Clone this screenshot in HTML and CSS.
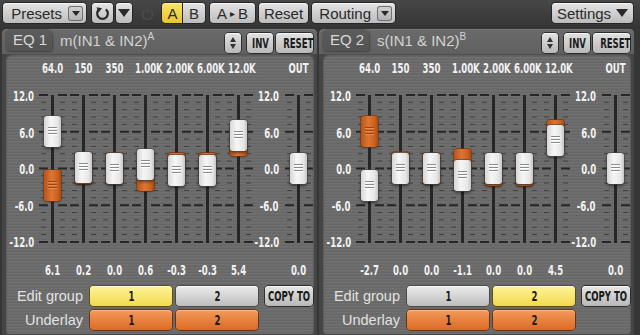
FILE: index.html
```html
<!DOCTYPE html>
<html lang="en">
    <head>
        <title>Dual EQ</title>
        <meta charset="utf-8" name="viewport" content="width=device-width, initial-scale=1">
        <link rel="stylesheet" href="styles.css">
    </head>
    <body>
        <div class="topbar">
            <div class="btn presets">Presets <span class="dd"><i class="tri"></i></span></div>
            <div class="btn undo">
                <svg width="15" height="15" viewBox="0 0 15 15"><path d="M4.2 3.4 A5.3 5.3 0 1 0 10.8 3.4" fill="none" stroke="#2b2b2b" stroke-width="2.2"/><polygon points="1.5,1.2 7,2.2 3.6,6.6" fill="#2b2b2b"/></svg>
            </div>
            <div class="btn ddbtn"><i class="tri big"></i></div>
            <div class="power">
                <svg width="13" height="13" viewBox="0 0 13 13"><path d="M4 2.2 A5 5 0 1 0 9 2.2" fill="none" stroke="#4c4c4c" stroke-width="1.6"/><line x1="6.5" y1="0.5" x2="6.5" y2="5" stroke="#4c4c4c" stroke-width="1.6"/></svg>
            </div>
            <div class="ab">
                <div class="btn seg on">A</div>
                <div class="btn seg">B</div>
            </div>
            <div class="btn atob">A <span class="small-tri">&#9656;</span> B</div>
            <div class="btn reset">Reset</div>
            <div class="btn routing">Routing <span class="dd"><i class="tri"></i></span></div>
            <div class="btn settings">Settings <i class="tri big"></i></div>
        </div>

        <div class="panels">
            <!-- EQ 1 -->
            <section class="panel">
                <div class="panel-head">
                    <div class="tab">EQ 1</div>
                    <div class="title">m(IN1 &amp; IN2)<sup>A</sup></div>
                    <div class="hbtn spin"><i class="up"></i><i class="down"></i></div>
                    <div class="hbtn inv"><span class="n">INV</span></div>
                    <div class="hbtn rst"><span class="n">RESET</span></div>
                </div>
                <div class="panel-body">
                    <div class="strip labels">
                        <span></span><span>64.0</span><span>150</span><span>350</span><span>1.00K</span><span>2.00K</span><span>6.00K</span><span>12.0K</span><span></span><span>OUT</span>
                    </div>
                    <div class="strip faders">
                        <div class="scale"><span>12.0</span><span>6.0</span><span>0.0</span><span>-6.0</span><span>-12.0</span></div>
                        <div class="fader"><div class="cap under" style="--v:-2.7"></div><div class="cap" style="--v:6.1"></div></div>
                        <div class="fader"><div class="cap under" style="--v:0"></div><div class="cap" style="--v:0.2"></div></div>
                        <div class="fader"><div class="cap under" style="--v:0"></div><div class="cap" style="--v:0"></div></div>
                        <div class="fader"><div class="cap under" style="--v:-1.1"></div><div class="cap" style="--v:0.6"></div></div>
                        <div class="fader"><div class="cap under" style="--v:0"></div><div class="cap" style="--v:-0.3"></div></div>
                        <div class="fader"><div class="cap under" style="--v:0"></div><div class="cap" style="--v:-0.3"></div></div>
                        <div class="fader"><div class="cap under" style="--v:4.5"></div><div class="cap" style="--v:5.4"></div></div>
                        <div class="scale right"><span>12.0</span><span>6.0</span><span>0.0</span><span>-6.0</span><span>-12.0</span></div>
                        <div class="fader"><div class="cap" style="--v:0"></div></div>
                    </div>
                    <div class="strip values">
                        <span></span><span>6.1</span><span>0.2</span><span>0.0</span><span>0.6</span><span>-0.3</span><span>-0.3</span><span>5.4</span><span></span><span>0.0</span>
                    </div>
                    <div class="grow">
                        <div class="glabel">Edit group</div>
                        <div class="gbtn yellow"><span class="n">1</span></div>
                        <div class="gbtn grey"><span class="n">2</span></div>
                        <div class="gbtn copy"><span class="n">COPY TO</span></div>
                    </div>
                    <div class="grow">
                        <div class="glabel">Underlay</div>
                        <div class="gbtn orange"><span class="n">1</span></div>
                        <div class="gbtn orange"><span class="n">2</span></div>
                    </div>
                </div>
            </section>

            <!-- EQ 2 -->
            <section class="panel">
                <div class="panel-head">
                    <div class="tab">EQ 2</div>
                    <div class="title">s(IN1 &amp; IN2)<sup>B</sup></div>
                    <div class="hbtn spin"><i class="up"></i><i class="down"></i></div>
                    <div class="hbtn inv"><span class="n">INV</span></div>
                    <div class="hbtn rst"><span class="n">RESET</span></div>
                </div>
                <div class="panel-body">
                    <div class="strip labels">
                        <span></span><span>64.0</span><span>150</span><span>350</span><span>1.00K</span><span>2.00K</span><span>6.00K</span><span>12.0K</span><span></span><span>OUT</span>
                    </div>
                    <div class="strip faders">
                        <div class="scale"><span>12.0</span><span>6.0</span><span>0.0</span><span>-6.0</span><span>-12.0</span></div>
                        <div class="fader"><div class="cap under" style="--v:6.1"></div><div class="cap" style="--v:-2.7"></div></div>
                        <div class="fader"><div class="cap under" style="--v:0.2"></div><div class="cap" style="--v:0"></div></div>
                        <div class="fader"><div class="cap under" style="--v:0"></div><div class="cap" style="--v:0"></div></div>
                        <div class="fader"><div class="cap under" style="--v:0.6"></div><div class="cap" style="--v:-1.1"></div></div>
                        <div class="fader"><div class="cap under" style="--v:-0.3"></div><div class="cap" style="--v:0"></div></div>
                        <div class="fader"><div class="cap under" style="--v:-0.3"></div><div class="cap" style="--v:0"></div></div>
                        <div class="fader"><div class="cap under" style="--v:5.4"></div><div class="cap" style="--v:4.5"></div></div>
                        <div class="scale right"><span>12.0</span><span>6.0</span><span>0.0</span><span>-6.0</span><span>-12.0</span></div>
                        <div class="fader"><div class="cap" style="--v:0"></div></div>
                    </div>
                    <div class="strip values">
                        <span></span><span>-2.7</span><span>0.0</span><span>0.0</span><span>-1.1</span><span>0.0</span><span>0.0</span><span>4.5</span><span></span><span>0.0</span>
                    </div>
                    <div class="grow">
                        <div class="glabel">Edit group</div>
                        <div class="gbtn grey"><span class="n">1</span></div>
                        <div class="gbtn yellow"><span class="n">2</span></div>
                        <div class="gbtn copy"><span class="n">COPY TO</span></div>
                    </div>
                    <div class="grow">
                        <div class="glabel">Underlay</div>
                        <div class="gbtn orange"><span class="n">1</span></div>
                        <div class="gbtn orange"><span class="n">2</span></div>
                    </div>
                </div>
            </section>
        </div>
    </body>
</html>
```

FILE: styles.css
```css
*{
    box-sizing: border-box;
}
body{
    margin: 0;
    width: 640px;
    height: 335px;
    overflow: hidden;
    background: #363636;
    font-family: "Liberation Sans", Arial, sans-serif;
}

/* ---------- top bar ---------- */
.topbar{
    display: flex;
    height: 29px;
    padding: 3px 7px 0 3px;
    background: linear-gradient(#474747, #343434);
}
.btn{
    height: 20px;
    display: flex;
    align-items: center;
    justify-content: center;
    border-radius: 4px;
    background: linear-gradient(#e4e4e4, #bcbcbc);
    box-shadow: 0 0 0 1px #262626, inset 0 1px 0 #f7f7f7;
    color: #2a2a2a;
    font-size: 15px;
}
.tri{
    display: inline-block;
    width: 0;
    height: 0;
    border-left: 4px solid transparent;
    border-right: 4px solid transparent;
    border-top: 5px solid #2a2a2a;
}
.tri.big{
    border-left-width: 6px;
    border-right-width: 6px;
    border-top-width: 8px;
}
.dd{
    width: 15px;
    height: 15px;
    margin-left: 6px;
    display: flex;
    align-items: center;
    justify-content: center;
    border-radius: 3px;
    background: linear-gradient(#d2d2d2, #b0b0b0);
    box-shadow: inset 0 0 0 1px #707070;
}
.presets{
    width: 83px;
    justify-content: flex-end;
    padding-right: 3px;
}
.undo{
    width: 21px;
    margin-left: 6px;
}
.ddbtn{
    width: 16px;
    margin-left: 3px;
}
.power{
    width: 13px;
    margin-left: 9px;
    padding-top: 4px;
}
.ab{
    display: flex;
    margin-left: 8px;
}
.seg{
    width: 22px;
    border-radius: 0 4px 4px 0;
}
.seg.on{
    width: 21px;
    border-radius: 4px 0 0 4px;
    background: linear-gradient(#f8e46a, #e8c62a);
    box-shadow: 0 0 0 1px #262626, inset 0 1px 0 #fff3a8;
}
.atob{
    width: 45px;
    margin-left: 5px;
}
.small-tri{
    font-size: 10px;
    margin: 0 3px;
}
.reset{
    width: 49px;
    margin-left: 4px;
}
.routing{
    width: 83px;
    margin-left: 4px;
    justify-content: flex-end;
    padding-right: 3px;
}
.settings{
    width: 81px;
    margin-left: auto;
}
.settings .tri{
    margin-left: 5px;
}

/* ---------- panels ---------- */
.panels{
    display: flex;
    gap: 2px;
    padding-left: 2px;
}
.panel{
    width: 315px;
    height: 306px;
    background: #454545;
    border-radius: 5px 5px 0 0;
    padding: 0 3px 1px 4px;
    display: flex;
    flex-direction: column;
}
.panel-head{
    display: flex;
    align-items: flex-start;
    height: 25px;
    margin: 0 -3px 0 -4px;
    padding-right: 4px;
    background: linear-gradient(#6a6a6a, #606060);
    border-radius: 5px 5px 0 0;
    box-shadow: inset 0 1px 0 #777;
}
.tab{
    width: 47px;
    height: 22px;
    margin-left: 3px;
    padding-left: 8px;
    line-height: 22px;
    color: #d8d8d8;
    font-size: 15px;
    background: linear-gradient(#5c5c5c, #535353);
    border-radius: 5px 6px 4px 4px;
    box-shadow: 1px 1px 2px rgba(0,0,0,0.35);
}
.title{
    flex: 1;
    padding-left: 8px;
    line-height: 24px;
    font-size: 15px;
    color: #d2d2d2;
}
.title sup{
    font-size: 10px;
    vertical-align: 6px;
    line-height: 0;
}

/* narrow label type */
.n, .labels span, .values span, .scale span{
    display: inline-block;
    font-family: "DejaVu Sans Condensed", "DejaVu Sans", sans-serif;
    font-weight: bold;
    white-space: nowrap;
    transform: scaleX(0.68);
}
.hbtn{
    height: 20px;
    margin-top: 4px;
    border-radius: 4px;
    background: linear-gradient(#e2e2e2, #b8b8b8);
    box-shadow: 0 0 0 1px #2e2e2e, inset 0 1px 0 #f6f6f6;
    color: #1c1c1c;
    font-size: 14px;
    line-height: 20px;
    text-align: center;
    white-space: nowrap;
}
.spin{
    width: 16px;
    display: flex;
    flex-direction: column;
    align-items: center;
    justify-content: center;
    gap: 2px;
    margin-right: 6px;
}
.spin .up, .spin .down{
    width: 0;
    height: 0;
    border-left: 3.5px solid transparent;
    border-right: 3.5px solid transparent;
}
.spin .up{
    border-bottom: 5px solid #333;
}
.spin .down{
    border-top: 5px solid #333;
}
.inv{
    width: 26px;
    margin-right: 3px;
}
.rst{
    width: 37px;
}

.panel-body{
    flex: 1;
    border-radius: 6px 6px 3px 3px;
    background-color: #6b6b6b;
    background-image: repeating-linear-gradient(rgba(255,255,255,0.035) 0 1px, transparent 1px 2px, rgba(0,0,0,0.04) 2px 3px);
    box-shadow: inset 0 1px 2px rgba(0,0,0,0.4);
}

/* columns: scale, 7 bands, scale, out */
.strip{
    display: grid;
    grid-template-columns: 31px repeat(7, 31px) 29px 31px;
}
.labels, .values{
    font-size: 14px;
    color: #f2f2f2;
    text-align: center;
}
.labels span, .values span{
    display: block;
}
.labels{
    height: 28px;
    line-height: 29px;
}
.values{
    height: 24px;
    line-height: 24px;
}
.faders{
    height: 176px;
}
.scale{
    display: flex;
    flex-direction: column;
    justify-content: space-between;
    align-items: flex-end;
    height: 164px;
    margin-top: 5px;
    padding-right: 3px;
    font-size: 14px;
    color: #f2f2f2;
}
.scale span{
    height: 18px;
    line-height: 18px;
    transform-origin: right center;
}
.scale.right{
    padding-right: 4px;
}

.fader{
    position: relative;
    background: linear-gradient(#262626, #262626) 14px 13px / 3px 148px no-repeat;
}
.fader::before, .fader::after{
    content: "";
    position: absolute;
    top: 12px;
    width: 9px;
    height: 150px;
    background:
        linear-gradient(#262626 0 2px, transparent 2px) 0 0 / 9px 36.75px repeat-y,
        linear-gradient(#3c3c3c 0 1px, transparent 1px) 2px 0.5px / 5px 7.35px repeat-y;
}
.fader::before{
    left: 2px;
}
.fader::after{
    left: 21px;
}
.cap{
    position: absolute;
    z-index: 1;
    left: 7px;
    width: 17px;
    height: 31px;
    top: calc(71px - var(--v) * 6.125px);
    border-radius: 3px;
    background: linear-gradient(90deg, #d6d6d6, #f6f6f6 40%, #e6e6e6 80%, #c6c6c6);
    box-shadow: 0 0 0 1px rgba(70,70,70,0.6), 0 2px 3px rgba(0,0,0,0.45);
}
.cap::after{
    content: "";
    position: absolute;
    left: 4px;
    right: 4px;
    top: 11px;
    height: 8px;
    background: repeating-linear-gradient(#8a8a8a 0 1px, #fff 1px 2px, transparent 2px 3px);
}
.cap.under{
    background: linear-gradient(90deg, #b85418, #dd7634 45%, #c9621f 80%, #a84a14);
    box-shadow: 0 0 0 1px rgba(120,50,10,0.6), 0 1px 2px rgba(0,0,0,0.35);
}
.cap.under::after{
    background: repeating-linear-gradient(#9c4412 0 1px, #e88a48 1px 2px, transparent 2px 3px);
}

/* ---------- group buttons ---------- */
.grow{
    display: flex;
    align-items: center;
    height: 21px;
    margin-top: 3px;
}
.glabel{
    width: 77px;
    margin-right: 7px;
    text-align: right;
    color: #e2e2e2;
    font-size: 14.5px;
}
.gbtn{
    width: 82px;
    height: 20px;
    margin-right: 4px;
    border-radius: 4px;
    font-size: 14px;
    line-height: 20px;
    text-align: center;
    color: #1a1a1a;
    white-space: nowrap;
}
.yellow{
    background: linear-gradient(#fff39a, #f2d94e);
    box-shadow: 0 0 0 1px #5c5016, inset 0 1px 0 #fffbd0;
}
.grey{
    background: linear-gradient(#ececec, #bdbdbd);
    box-shadow: 0 0 0 1px #4a4a4a, inset 0 1px 0 #fafafa;
}
.orange{
    background: linear-gradient(#f49a5a, #dc6a26);
    box-shadow: 0 0 0 1px #6a3410, inset 0 1px 0 #ffb88a;
}
.copy{
    width: 48px;
    margin-left: 3px;
    margin-right: 0;
    background: linear-gradient(#e6e6e6, #b8b8b8);
    box-shadow: 0 0 0 1px #2e2e2e, inset 0 1px 0 #f8f8f8;
}
.copy .n{
    margin: 0 -10px;
}
```
